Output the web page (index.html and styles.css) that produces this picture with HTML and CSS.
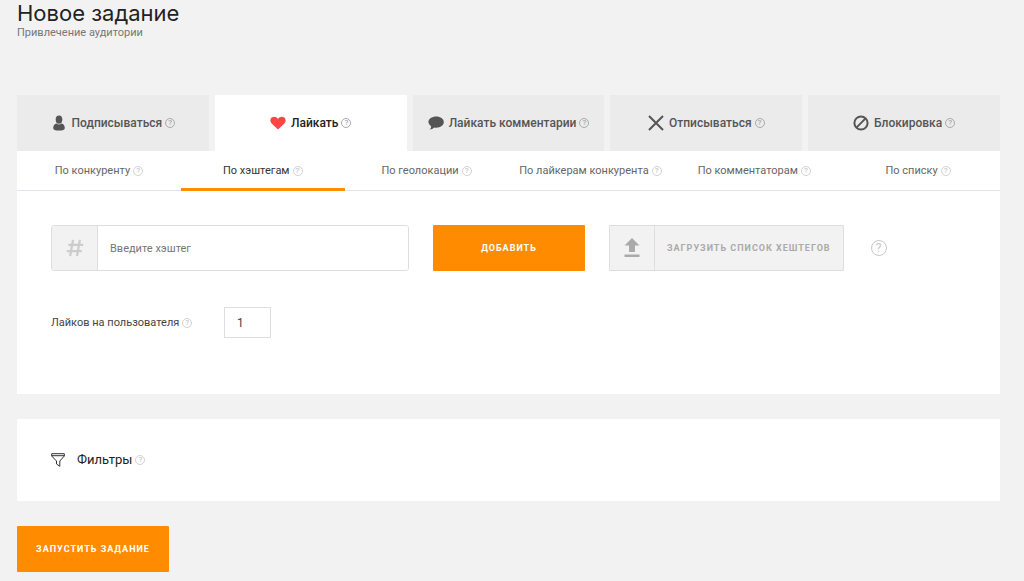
FILE: index.html
```html
<!DOCTYPE html>
<html lang="ru">
<head>
  <meta charset="UTF-8">
  <meta name="viewport" content="width=device-width, initial-scale=1.0">
  <title>Новое задание</title>
  <link rel="stylesheet" href="styles.css">
</head>
<body>
  <header class="page-header">
    <h1>Новое задание</h1>
    <p>Привлечение аудитории</p>
  </header>

  <main>
    <!-- Task type -->
    <nav class="tabs">
      <a href="#follow" class="tab">
        <svg class="icon" viewBox="0 0 16 16"><ellipse cx="8" cy="4.6" rx="3.3" ry="4.2"/><path d="M5.6 8.4Q8 10.4 10.4 8.4Q13.8 9.2 13.8 13Q13.8 15.6 8 15.6Q2.2 15.6 2.2 13Q2.2 9.2 5.6 8.4Z"/></svg>
        <span>Подписываться</span><span class="help">?</span>
      </a>
      <a href="#like" class="tab active">
        <svg class="icon heart" viewBox="0 0 16 16"><path d="M8 14.6L1.6 8.4C-.4 6.2 .2 3.4 2.2 2.3C4.4 1.1 6.8 1.9 8 4C9.2 1.9 11.6 1.1 13.8 2.3C15.8 3.4 16.4 6.2 14.4 8.4Z"/></svg>
        <span>Лайкать</span><span class="help">?</span>
      </a>
      <a href="#like-comments" class="tab">
        <svg class="icon" viewBox="0 0 16 16"><path d="M8.2 1.5C12.5 1.5 15.8 3.9 15.8 7.1S12.5 12.7 8.2 12.7Q7.2 12.7 6.3 12.5Q4.4 14.4 1.6 14.6Q3.1 13.1 3.2 11.4Q.4 9.8 .4 7.1C.4 3.9 3.9 1.5 8.2 1.5Z"/></svg>
        <span>Лайкать комментарии</span><span class="help">?</span>
      </a>
      <a href="#unfollow" class="tab">
        <svg class="icon line" viewBox="0 0 16 16"><path d="M1 1L15 15M15 1L1 15"/></svg>
        <span>Отписываться</span><span class="help">?</span>
      </a>
      <a href="#block" class="tab">
        <svg class="icon line" viewBox="0 0 16 16"><circle cx="8" cy="8" r="6.6"/><path d="M3.4 12.6L12.6 3.4"/></svg>
        <span>Блокировка</span><span class="help">?</span>
      </a>
    </nav>

    <section class="panel">
      <!-- Source of users -->
      <nav class="subtabs">
        <a href="#rival">По конкуренту<span class="help light">?</span></a>
        <a href="#hashtags" class="active">По хэштегам<span class="help light">?</span></a>
        <a href="#geo">По геолокации<span class="help light">?</span></a>
        <a href="#likers">По лайкерам конкурента<span class="help light">?</span></a>
        <a href="#commenters">По комментаторам<span class="help light">?</span></a>
        <a href="#list">По списку<span class="help light">?</span></a>
      </nav>

      <form class="settings">
        <div class="row">
          <div class="field">
            <label for="hashtag" aria-label="Хэштег">
              <svg class="hash" viewBox="0 0 20 20"><path d="M7.8 1L4.6 19M15.4 1L12.2 19M2.5 6.6H19M1 13.4H17.5"/></svg>
            </label>
            <input type="text" id="hashtag" placeholder="Введите хэштег">
          </div>
          <button type="button" class="btn">Добавить</button>
          <button type="button" class="upload">
            <span class="upload-icon"><svg viewBox="0 0 16 20"><path d="M8 0L15.5 7.5H11V14H5V7.5H.5ZM.5 16.5H15.5V19H.5Z"/></svg></span>
            <span class="upload-text">Загрузить список хештегов</span>
          </button>
          <span class="help light large">?</span>
        </div>
        <div class="row likes">
          <label for="likes">Лайков на пользователя<span class="help light">?</span></label>
          <input type="text" id="likes" value="1">
        </div>
      </form>
    </section>

    <section class="panel filters">
      <svg class="funnel" viewBox="0 0 14 14"><path d="M.7 .7H13.3V3L8.8 8V13.3L5.5 11V8L.7 3ZM.7 2.7H13.3"/></svg>
      <h2>Фильтры</h2><span class="help light">?</span>
    </section>

    <button type="button" class="btn">Запустить задание</button>
  </main>
</body>
</html>
```
FILE: styles.css
```css
* {
  margin: 0;
  padding: 0;
  box-sizing: border-box;
}

body {
  background-color: #f2f2f2;
  color: #222;
  font-family: Roboto, sans-serif;
  font-size: 12px;
  line-height: 16px;
  padding: 0 24px 8px 17px;
}

a {
  color: inherit;
  text-decoration: none;
}

button, input {
  font-family: inherit;
}

.page-header {
  height: 95px;
}

h1 {
  font-family: Inter, sans-serif;
  font-size: 22px;
  font-weight: 400;
  line-height: 26px;
}

.page-header p {
  font-size: 11px;
  line-height: 14px;
  color: #777;
}

/* Question mark hints */
.help {
  display: inline-flex;
  align-items: center;
  justify-content: center;
  flex: none;
  width: 10px;
  height: 10px;
  margin-left: 3px;
  border: 1px solid #aaa;
  border-radius: 50%;
  color: #aaa;
  font-size: 8px;
  font-weight: 500;
  line-height: 8px;
}

.help.light {
  border-color: #d2d2d2;
  color: #c8c8c8;
}

.help.large {
  width: 16px;
  height: 16px;
  border-color: #c8c8c8;
  font-size: 12px;
  font-weight: 400;
}

/* Main tabs */
.tabs {
  display: grid;
  grid-template-columns: repeat(5, 1fr);
  gap: 6px;
}

.tab {
  display: flex;
  align-items: center;
  justify-content: center;
  height: 56px;
  background-color: #ebebeb;
  color: #555;
  font-weight: 500;
  white-space: nowrap;
}

.tab.active {
  background-color: #fff;
  color: #222;
}

.icon {
  width: 16px;
  height: 16px;
  margin-right: 5px;
  fill: #555;
}

.heart {
  fill: #ff4545;
}

.line {
  fill: none;
  stroke: #555;
  stroke-width: 2;
}

.panel {
  background-color: #fff;
  margin-bottom: 25px;
}

/* Sub tabs */
.subtabs {
  display: grid;
  grid-template-columns: repeat(6, 1fr);
  border-bottom: 1px solid #e4e4ea;
}

.subtabs a {
  display: flex;
  align-items: center;
  justify-content: center;
  height: 39px;
  font-size: 11px;
  color: #666;
  white-space: nowrap;
}

.subtabs .active {
  height: 40px;
  margin-bottom: -1px;
  padding-top: 2px;
  border-bottom: 3px solid #ff8c00;
  color: #333;
}

/* Form */
.settings {
  padding: 34px 34px 56px;
}

.row {
  display: flex;
  align-items: center;
  gap: 24px;
}

.field {
  display: flex;
  width: 358px;
  height: 46px;
  border: 1px solid #dedede;
  border-radius: 3px;
  overflow: hidden;
}

.field label {
  display: flex;
  align-items: center;
  justify-content: center;
  width: 46px;
  background-color: #f2f2f2;
  border-right: 1px solid #dedede;
}

.hash {
  width: 18px;
  height: 18px;
  fill: none;
  stroke: #ccc;
  stroke-width: 2.5;
}

.field input {
  flex: 1;
  min-width: 0;
  padding: 0 12px;
  border: none;
  font-size: 11px;
}

.field input::placeholder {
  color: #777;
}

.btn {
  width: 152px;
  height: 46px;
  border: none;
  border-radius: 1px;
  background-color: #ff8c00;
  color: #fff;
  font-size: 9px;
  font-weight: 700;
  letter-spacing: 1px;
  text-transform: uppercase;
  cursor: pointer;
}

.upload {
  display: flex;
  align-items: stretch;
  height: 46px;
  border: 1px solid #dedede;
  border-radius: 1px;
  background-color: #f2f2f2;
  color: #aaa;
  font-size: 9px;
  font-weight: 700;
  letter-spacing: 1px;
  text-transform: uppercase;
  white-space: nowrap;
  cursor: pointer;
}

.upload-icon {
  display: flex;
  align-items: center;
  justify-content: center;
  width: 45px;
  border-right: 1px solid #dedede;
}

.upload-icon svg {
  width: 16px;
  height: 20px;
  fill: #aaa;
}

.upload-text {
  padding: 0 12px;
  align-self: center;
}

.likes {
  margin-top: 36px;
}

.likes label {
  display: flex;
  align-items: center;
  width: 149px;
  font-size: 11px;
  color: #444;
  white-space: nowrap;
}

.likes input {
  width: 47px;
  height: 31px;
  padding: 0 12px;
  border: 1px solid #dedede;
  color: #444;
  font-size: 12px;
}

/* Filters */
.filters {
  display: flex;
  align-items: center;
  height: 82px;
  padding: 0 34px;
}

.funnel {
  width: 14px;
  height: 14px;
  margin-right: 12px;
  fill: none;
  stroke: #333;
  stroke-width: 1;
}

h2 {
  font-size: 13px;
  font-weight: 400;
}
```
